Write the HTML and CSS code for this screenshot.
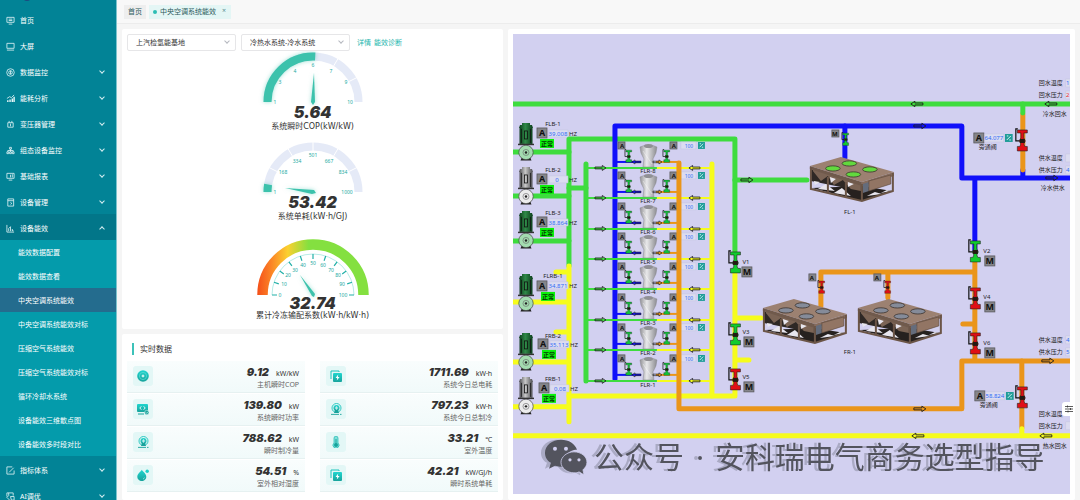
FILE: index.html
```
<!DOCTYPE html>
<html lang="zh-CN">
<head>
    <meta charset="UTF-8">
    <meta name="viewport" content="width=device-width, initial-scale=1.0">
    <title>中央空调系统能效</title>
    <link rel="stylesheet" href="styles.css">
</head>
<body>
    <svg class="defs" width="0" height="0" aria-hidden="true">
        <defs>
            <linearGradient id="teal" x1="0" y1="0" x2="0" y2="1">
                <stop offset="0" stop-color="#1fd6cf"/>
                <stop offset="1" stop-color="#18a39c"/>
            </linearGradient>
            <linearGradient id="level" gradientUnits="userSpaceOnUse" x1="-55" y1="0" x2="55" y2="0">
                <stop offset="0" stop-color="#f5521a"/>
                <stop offset="0.12" stop-color="#fb8426"/>
                <stop offset="0.27" stop-color="#fbd02f"/>
                <stop offset="0.46" stop-color="#84e040"/>
            </linearGradient>
            <linearGradient id="motorOn" x1="0" x2="1">
                <stop offset="0" stop-color="#0d3d1c"/>
                <stop offset="0.45" stop-color="#2f8a48"/>
                <stop offset="1" stop-color="#0d3d1c"/>
            </linearGradient>
            <linearGradient id="motorOff" x1="0" x2="1">
                <stop offset="0" stop-color="#4c4c50"/>
                <stop offset="0.45" stop-color="#c8c8c8"/>
                <stop offset="1" stop-color="#4c4c50"/>
            </linearGradient>
            <linearGradient id="steel" x1="0" x2="1">
                <stop offset="0" stop-color="#929296"/>
                <stop offset="0.4" stop-color="#e8e8ea"/>
                <stop offset="1" stop-color="#8b8b90"/>
            </linearGradient>
        </defs>
        <symbol id="i-bolt" viewBox="0 0 12 12">
            <path d="M1 9V1h8v1" fill="none" stroke="#1cc4bc"/>
            <rect x="3" y="3" width="9" height="9" rx="1" fill="url(#teal)"/>
            <path d="M8.2 4.5 5.6 8h1.6l-.4 2.4L9.6 7H7.9z" fill="#fff"/>
        </symbol>
        <symbol id="i-cop" viewBox="0 0 12 12">
            <circle cx="6" cy="6" r="5.8" fill="url(#teal)"/>
            <circle cx="6" cy="6" r="3.6" fill="none" stroke="#6fe0da" stroke-width=".6"/>
            <path d="M6 4.6v2.8M4.6 6h2.8" stroke="#fff" stroke-width="1"/>
        </symbol>
        <symbol id="i-screen" viewBox="0 0 12 12">
            <rect y="1" width="11" height="8" rx="1" fill="url(#teal)"/>
            <path d="M4.3 3.3 2.8 5l1.5 1.7M6.7 3.3 8.2 5 6.7 6.7" fill="none" stroke="#fff" stroke-width=".9"/>
            <path d="M1 11h6" stroke="#18a39c"/>
            <circle cx="9.8" cy="9.5" r="2.2" fill="#18a39c" stroke="#e3f7f6" stroke-width=".5"/>
            <path d="m8.8 9.5.8.8 1.3-1.5" fill="none" stroke="#fff" stroke-width=".6"/>
        </symbol>
        <symbol id="i-cold" viewBox="0 0 12 12">
            <circle cx="6.5" cy="5" r="4.5" fill="none" stroke="#1cc4bc" stroke-width=".9"/>
            <circle cx="6.5" cy="5" r="3" fill="url(#teal)"/>
            <path d="M6.5 3v4M4.8 4l3.4 2M8.2 4 4.8 6" stroke="#fff" stroke-width=".5"/>
            <path d="M4 10h5l-1-3H5z" fill="#18a39c"/>
            <path d="M1 11.4h8m1 0h1.5" stroke="#18a39c" stroke-width=".9"/>
        </symbol>
        <symbol id="i-temp" viewBox="0 0 12 12">
            <path d="M4 2.2a2 2 0 0 1 4 0V7a3 3 0 1 1-4 0z" fill="#7fe0da" stroke="#1cb9b1" stroke-width=".7"/>
            <circle cx="6" cy="9" r="2" fill="#18a39c"/>
            <path d="M6 3v6" stroke="#18a39c"/>
        </symbol>
        <symbol id="i-drop" viewBox="0 0 12 12">
            <path d="M4.8.8C6.5 3.2 9.3 5 9.3 7.900a4.500 4.200 0 0 1-9 0C.3 5 3.200 3.200 4.800.8z" fill="url(#teal)"/>
            <circle cx="10.200" cy="2.200" r="1.700" fill="#1fd0c8"/>
            <path d="M6 10a2 2 0 0 0 1.500-1.500" stroke="#bff5f1" stroke-width=".6" fill="none"/>
        </symbol>
        <symbol id="pump" viewBox="0 0 16 38" overflow="visible">
            <path d="M4 0h8v2h2l1 3H1l1-3h2z"/>
            <rect x="1.500" y="5" width="13" height="16"/>
            <path d="M3.500 6v14M12.500 6v14" stroke="#111" stroke-width=".7"/>
            <rect x="6.500" y="8" width="3" height="8" fill="none" stroke="#111" stroke-width=".8"/>
            <path d="M0 21.500h16" stroke="#333" stroke-width="1.500"/>
            <path d="M4 34h8l1.500 3.500h-11z" fill="#222"/>
            <circle cx="8" cy="29.500" r="7.200" fill="currentColor" stroke="#444" stroke-width=".7"/>
            <circle cx="8" cy="29.500" r="3" fill="none" stroke="#666" stroke-width=".6"/>
            <circle cx="8" cy="29.500" r="1.200" fill="#222"/>
        </symbol>
        <symbol id="valve" viewBox="0 0 12 24" overflow="visible">
            <path d="M2 1H0v12h4" fill="none" stroke="#111" stroke-width="1.200"/>
            <path d="M1.500 2h10v3H8v5l1.500 3-1.500 3 1 2.500h2.500V23H1.500v-4.500H4L5 16l-1.500-3L5 10V5H1.500z" stroke="#222" stroke-width=".6"/>
            <rect x="4" y="11" width="5" height="4" fill="#221a12"/>
        </symbol>
        <symbol id="chiller" viewBox="0 0 84 46" overflow="visible">
            <path d="m2 31 50 13 30-10-30-5z" fill="#26211f"/>
            <path d="m8 32 8-5 9 7zm16 4 8-5 9 8zm33 3 8-4 7 2zm14-3 6-3 4 1z" fill="#e8e6ee"/>
            <path d="m1 12 50 14v8L1 24z" fill="#2e2825"/>
            <path d="m3 14 8 10 7-5 6 9 9-5 8 9 10 2v-8L3 12z" fill="#7b6455"/>
            <path d="m20 20 6 2-5 4zm18 5 6 2-6 3zM4 24l6 1-5 3z" fill="#e8e6ee"/>
            <path d="M0 9 31 0l53 15-32 10z" fill="#9c8171"/>
            <path d="m0 9 52 16v4L0 12z" fill="#705a4c"/>
            <path d="m52 25 32-10v4L52 29z" fill="#866c5d"/>
            <path d="m53 27 6-2v9l-6 2z" fill="#646c7c"/>
            <path d="m59 24 22-6v9l-22 7z" fill="#927564" stroke="#5b483d" stroke-width=".6"/>
            <path d="M1 10v22l51 12 31-10V16M52 27v17M18 20v16M36 25v16" fill="none" stroke="#6b5547" stroke-width="2"/>
            <g stroke="#3c342f" stroke-width=".8">
                <ellipse cx="23" cy="11.500" rx="7.300" ry="2.600"/>
                <ellipse cx="39.500" cy="6.500" rx="7.300" ry="2.600"/>
                <ellipse cx="60" cy="12.500" rx="7.300" ry="2.600"/>
                <ellipse cx="43.500" cy="17.500" rx="7.300" ry="2.600"/>
            </g>
        </symbol>
        <symbol id="arrow" viewBox="0 0 12 6" overflow="visible">
            <path d="M0 2h8V.3L12 3 8 5.700V4H0z" fill="none" stroke="#1c1c1c" stroke-width=".9"/>
        </symbol>
        <symbol id="percent" viewBox="0 0 8 8">
            <rect width="8" height="8" fill="#1f9c98"/>
            <path d="m2 6 4-4M2 2h1.500M4.500 6H6" stroke="#e8ffff" stroke-width=".9"/>
        </symbol>
        <!-- one cooling tower branch, drawn at the position of tower 8 -->
        <symbol id="tower-row" overflow="visible">
            <path d="M586 168h71" class="pipe thin green"/>
            <path d="M657 168h55" class="pipe thin yellow"/>
            <path d="M615 162h26" class="pipe thin blue"/>
            <path d="M656 162h23" class="pipe thin orange"/>
            <path d="M640 147q9-4 17 0l-1 6-3 6 1 8h-11l1-8-3-6z" fill="url(#steel)" stroke="#8a8a90" stroke-width=".5"/>
            <ellipse cx="648.500" cy="146" rx="4.500" ry="2" fill="#909095"/>
            <path d="m643 151 9 13" stroke="#fff" stroke-width=".8" opacity=".5"/>
            <use href="#valve" x="625" y="149" width="7" height="14" fill="#11c23a"/>
            <use href="#valve" x="663" y="149" width="7" height="14" fill="#11c23a"/>
            <rect x="618" y="142" width="7" height="7" class="mode"/>
            <rect x="670" y="142" width="7" height="7" class="mode"/>
            <rect x="681" y="142" width="15" height="7" class="field"/>
            <use href="#percent" x="698" y="142" width="7" height="7"/>
            <use href="#arrow" x="595" y="165" width="11" height="6"/>
            <use href="#arrow" x="-700" y="-171" width="11" height="6" transform="rotate(180)"/>
            <use href="#arrow" x="-641" y="-165" width="9" height="6" transform="rotate(180)"/>
            <use href="#arrow" x="653" y="159" width="9" height="6"/>
        </symbol>
    </svg>

    <div class="layout">
        <aside class="sidebar">
            <div class="brand"></div>
            <nav class="menu">
                <a href="#"><svg viewBox="0 0 10 10"><path d="M1 1.500h8v5.500H1zM3 9h4M3 3.500h4M3 5h4"/></svg>首页</a>
                <a href="#"><svg viewBox="0 0 10 10"><path d="M1 1.500h8V7H1zM1 9h8"/></svg>大屏</a>
                <a href="#" class="more"><svg viewBox="0 0 10 10"><circle cx="5" cy="5" r="4.200"/><circle cx="5" cy="5" r="2"/><path d="M5 3v4"/></svg>数据监控</a>
                <a href="#" class="more"><svg viewBox="0 0 10 10"><path d="M2 9V7M4.500 9V6M7 9V5M9 9V3" stroke-width="1.600"/><path d="m1 5 3-2 2 1 3-3"/></svg>能耗分析</a>
                <a href="#" class="more"><svg viewBox="0 0 10 10"><path d="M2 3h6v5H2zM3.500 1v2M6.500 1v2M5 4v3"/></svg>变压器管理</a>
                <a href="#" class="more"><svg viewBox="0 0 10 10"><path d="M4 1.500h2v2H4zM1 6.500h2v2H1zM4 6.500h2v2H4zM7 6.500h2v2H7zM5 3.500v3M2 6.500V5h6v1.500"/></svg>组态设备监控</a>
                <a href="#" class="more"><svg viewBox="0 0 10 10"><path d="M1 1.500h8V7H1zM3 9h4M5 3v3M7 2.500V6" /></svg>基础报表</a>
                <a href="#" class="more"><svg viewBox="0 0 10 10"><path d="M2 1h6.500v8H2zM2 3h6.500M5 5l1.500 1L5 7"/></svg>设备管理</a>
                <a href="#" class="more open"><svg viewBox="0 0 10 10"><path d="M1 1v8h8M3 8V5l2-2v5M7 8V6l1 2"/></svg>设备能效</a>
            </nav>
            <nav class="submenu">
                <a href="#">能效数据配置</a>
                <a href="#">能效数据查看</a>
                <a href="#" class="active">中央空调系统能效</a>
                <a href="#">中央空调系统能效对标</a>
                <a href="#">压缩空气系统能效</a>
                <a href="#">压缩空气系统能效对标</a>
                <a href="#">循环冷却水系统</a>
                <a href="#">设备能效三维散点图</a>
                <a href="#">设备能效多时段对比</a>
            </nav>
            <nav class="menu">
                <a href="#" class="more"><svg viewBox="0 0 10 10"><path d="M9 5v4H1V1h6M3.500 7l5-5"/></svg>指标体系</a>
                <a href="#" class="more"><svg viewBox="0 0 10 10"><path d="M1 5V1h7v3M3 1v3l-2 2 3 3M5 5h4v4H6z"/></svg>AI调优</a>
            </nav>
        </aside>

        <div class="page">
            <header class="tabs">
                <a href="#" class="tab">首页</a>
                <a href="#" class="tab current"><i class="dot"></i>中央空调系统能效<span class="close">×</span></a>
            </header>

            <main class="content">
                <div class="left">
                    <section class="card gauges">
                        <div class="filters">
                            <div class="picker">
                                <select aria-label="基地"><option>上汽检氢能基地</option></select>
                            </div>
                            <div class="picker">
                                <select aria-label="系统"><option>冷热水系统-冷水系统</option></select>
                            </div>
                            <a href="#">详情</a>
                            <a href="#">能效诊断</a>
                        </div>

                        <div class="gauge">
                            <svg width="120" height="54" viewBox="-60 -50 120 54">
                                <path class="track" d="M-45.500 0a45.500 45.500 0 0 1 91 0"/>
                                <path class="split" d="m-35 -20-10-5M-20 -35l-6-10M20 -35l6-10M35 -20l10-5"/>
                                <path class="fill" d="M-45.500 0A45.500 45.500 0 0 1 2.200-45.400"/>
                                <path class="needle" d="M1-29 2 0 0 3-2 0z"/>
                                <text x="-38">1</text>
                                <text x="-33" y="-20">3</text>
                                <text x="-18" y="-31">4</text>
                                <text y="-37">6</text>
                                <text x="18" y="-31">7</text>
                                <text x="33" y="-20">9</text>
                                <text x="37">10</text>
                            </svg>
                            <strong>5.64</strong>
                            <span>系统瞬时COP(kW/kW)</span>
                        </div>

                        <div class="gauge">
                            <svg width="120" height="54" viewBox="-60 -50 120 54">
                                <path class="track" d="M-45.500 0a45.500 45.500 0 0 1 91 0"/>
                                <path class="split" d="m-35 -20-10-5M-20 -35l-6-10M0-40v-11M20 -35l6-10M35 -20l10-5"/>
                                <path class="fill" d="M-45.500 0A45.500 45.500 0 0 1-44.900-7.500"/>
                                <path class="needle" d="M-28-4 1-2 3 1-1 2z"/>
                                <text x="-38">1</text>
                                <text x="-30" y="-20">168</text>
                                <text x="-16" y="-31">334</text>
                                <text y="-37">501</text>
                                <text x="16" y="-31">667</text>
                                <text x="30" y="-20">834</text>
                                <text x="34">1000</text>
                            </svg>
                            <strong>53.42</strong>
                            <span>系统单耗(kW·h/GJ)</span>
                        </div>

                        <div class="gauge wide">
                            <svg width="120" height="58" viewBox="-60 -56 120 58">
                                <path d="M-50.500 0a50.500 50.500 0 0 1 101 0" fill="none" stroke="url(#level)" stroke-width="10.500"/>
                                <path d="M-41 0a41 41 0 0 1 82 0" fill="none" stroke="#a5e6e0" stroke-width=".8"/>
                                <path class="ticks" d="M-41 0h5M-39-12.700l4.800 1.600M-33.200-24.100l4 3M-24.100-33.200l3 4M-12.700-39l1.600 4.800M0-41v5M12.700-39l-1.600 4.800M24.100-33.200l-3 4M33.200-24.100l-4 3M39-12.700l-4.800 1.600M41 0h-5"/>
                                <path class="needle" d="M-13-20 2-1 1 2-1 1z"/>
                                <text x="-33">0</text>
                                <text x="-29" y="-11">10</text>
                                <text x="-25" y="-20">20</text>
                                <text x="-18" y="-25">30</text>
                                <text x="-10" y="-30">40</text>
                                <text y="-32">50</text>
                                <text x="10" y="-30">60</text>
                                <text x="18" y="-25">70</text>
                                <text x="25" y="-20">80</text>
                                <text x="29" y="-11">90</text>
                                <text x="30">100</text>
                            </svg>
                            <strong>32.74</strong>
                            <span>累计冷冻输配系数(kW·h/kW·h)</span>
                        </div>
                    </section>

                    <section class="card realtime">
                        <h2>实时数据</h2>
                        <div class="stats">
                            <div class="stat"><i><svg><use href="#i-cop"/></svg></i><p><b>9.12</b><em>kW/kW</em></p><small>主机瞬时COP</small></div>
                            <div class="stat"><i><svg><use href="#i-bolt"/></svg></i><p><b>1711.69</b><em>kW·h</em></p><small>系统今日总电耗</small></div>
                            <div class="stat"><i><svg><use href="#i-screen"/></svg></i><p><b>139.80</b><em>kW</em></p><small>系统瞬时功率</small></div>
                            <div class="stat"><i><svg><use href="#i-cold"/></svg></i><p><b>797.23</b><em>kW·h</em></p><small>系统今日总制冷</small></div>
                            <div class="stat"><i><svg><use href="#i-cold"/></svg></i><p><b>788.62</b><em>kW</em></p><small>瞬时制冷量</small></div>
                            <div class="stat"><i><svg><use href="#i-temp"/></svg></i><p><b>33.21</b><em>℃</em></p><small>室外温度</small></div>
                            <div class="stat"><i><svg><use href="#i-drop"/></svg></i><p><b>54.51</b><em>%</em></p><small>室外相对湿度</small></div>
                            <div class="stat"><i><svg><use href="#i-bolt"/></svg></i><p><b>42.21</b><em>kW/GJ/h</em></p><small>瞬时系统单耗</small></div>
                        </div>
                    </section>
                </div>

                <section class="card diagram">
                    <svg class="scada" viewBox="513 34 557 460">
                        <!-- main pipes -->
                        <g class="pipe">
                            <path class="green" d="M513 104h557"/>
                            <path class="green" d="M513 152h56M513 196h56M513 241h56M569 188h17M735 180h72"/>
                            <path class="green" d="M569 266V139h166v114"/>
                            <path class="yellow" d="M569 266v156M513 302h56M513 362h56M513 407h56M556 272h13M556 332h13"/>
                            <path class="yellow" d="M569 396h166V274M735 318h26M735 360h14"/>
                            <path class="yellow" d="M513 436h557"/>
                            <path class="blue" d="M845 126v32"/>
                            <path class="blue" d="M615 379V126h347v52h108M975 178v72M1023 178v-8"/>
                            <path class="orange" d="M975 262v97M821 306v-34h154M888 272v26M963 324h12"/>
                            <path class="orange" d="M1023 114v56M1022 361v67"/>
                            <path class="green" d="M1023 104v9"/>
                            <path class="yellow" d="M1022 429v7"/>
                        </g>

                        <!-- cooling towers -->
                        <use href="#tower-row"/>
                        <use href="#tower-row" y="30"/>
                        <use href="#tower-row" y="61"/>
                        <use href="#tower-row" y="91"/>
                        <use href="#tower-row" y="121"/>
                        <use href="#tower-row" y="152"/>
                        <use href="#tower-row" y="182"/>
                        <use href="#tower-row" y="213"/>
                        <g class="pipe">
                            <path class="green" d="M586 164v217"/>
                            <path class="yellow" d="M712 164v232"/>
                            <path class="orange" d="M679 163v246h283v-48h108"/>
                        </g>
                        <g class="name">
                            <text x="648" y="171">FLR-8</text>
                            <text x="648" y="201">FLR-7</text>
                            <text x="648" y="232">FLR-6</text>
                            <text x="648" y="262">FLR-5</text>
                            <text x="648" y="292">FLR-4</text>
                            <text x="648" y="323">FLR-3</text>
                            <text x="648" y="353">FLR-2</text>
                            <text x="648" y="385">FLR-1</text>
                        </g>
                        <g class="tag">
                            <text x="622" y="146">A</text>
                            <text x="622" y="176">A</text>
                            <text x="622" y="207">A</text>
                            <text x="622" y="237">A</text>
                            <text x="622" y="267">A</text>
                            <text x="622" y="298">A</text>
                            <text x="622" y="328">A</text>
                            <text x="622" y="359">A</text>
                            <text x="674" y="146">A</text>
                            <text x="674" y="176">A</text>
                            <text x="674" y="207">A</text>
                            <text x="674" y="237">A</text>
                            <text x="674" y="267">A</text>
                            <text x="674" y="298">A</text>
                            <text x="674" y="328">A</text>
                            <text x="674" y="359">A</text>
                        </g>
                        <g class="reading small">
                            <text x="689" y="146">100</text>
                            <text x="689" y="176">100</text>
                            <text x="689" y="207">100</text>
                            <text x="689" y="237">100</text>
                            <text x="689" y="267">100</text>
                            <text x="689" y="298">100</text>
                            <text x="689" y="328">100</text>
                            <text x="689" y="359">100</text>
                        </g>

                        <!-- pumps -->
                        <g fill="url(#motorOn)" color="#a3dcb0">
                            <use href="#pump" x="518" y="123" width="16" height="38"/>
                            <use href="#pump" x="518" y="211" width="16" height="38"/>
                            <use href="#pump" x="518" y="274" width="16" height="38"/>
                            <use href="#pump" x="518" y="333" width="16" height="38"/>
                        </g>
                        <g fill="url(#motorOff)" color="#ececec">
                            <use href="#pump" x="518" y="167" width="16" height="38"/>
                            <use href="#pump" x="518" y="377" width="16" height="38"/>
                        </g>
                        <g class="field">
                            <rect x="549" y="130" width="19" height="7"/>
                            <rect x="549" y="176" width="19" height="7"/>
                            <rect x="549" y="219" width="19" height="7"/>
                            <rect x="549" y="282" width="19" height="7"/>
                            <rect x="550" y="341" width="19" height="7"/>
                            <rect x="550" y="385" width="19" height="7"/>
                        </g>
                        <g class="mode">
                            <rect x="537" y="128" width="10" height="10"/>
                            <rect x="537" y="174" width="10" height="10"/>
                            <rect x="537" y="217" width="10" height="10"/>
                            <rect x="537" y="281" width="10" height="10"/>
                            <rect x="538" y="339" width="10" height="10"/>
                            <rect x="539" y="383" width="10" height="10"/>
                        </g>
                        <g class="tag big">
                            <text x="542" y="133">A</text>
                            <text x="542" y="179">A</text>
                            <text x="542" y="222">A</text>
                            <text x="542" y="286">A</text>
                            <text x="543" y="344">A</text>
                            <text x="544" y="388">A</text>
                        </g>
                        <g class="reading">
                            <text x="558" y="134">39.008</text>
                            <text x="557" y="180">0</text>
                            <text x="558" y="223">38.864</text>
                            <text x="558" y="286">34.871</text>
                            <text x="559" y="345">35.113</text>
                            <text x="560" y="389">0.08</text>
                        </g>
                        <g class="name">
                            <text x="553" y="124">FLB-1</text>
                            <text x="553" y="170">FLB-2</text>
                            <text x="553" y="213">FLB-3</text>
                            <text x="553" y="276">FLRB-1</text>
                            <text x="553" y="336">FRB-2</text>
                            <text x="553" y="379">FRB-1</text>
                            <text x="573" y="134">HZ</text>
                            <text x="573" y="180">HZ</text>
                            <text x="573" y="223">HZ</text>
                            <text x="573" y="286">HZ</text>
                            <text x="574" y="345">HZ</text>
                            <text x="574" y="389">HZ</text>
                        </g>
                        <g fill="#0bf00b">
                            <rect x="540" y="139" width="14" height="9"/>
                            <rect x="540" y="185" width="14" height="9"/>
                            <rect x="540" y="228" width="14" height="9"/>
                            <rect x="541" y="292" width="14" height="9"/>
                            <rect x="542" y="350" width="14" height="9"/>
                            <rect x="542" y="394" width="14" height="9"/>
                        </g>
                        <g class="state">
                            <text x="547" y="144">正常</text>
                            <text x="547" y="190">正常</text>
                            <text x="547" y="233">正常</text>
                            <text x="548" y="297">正常</text>
                            <text x="549" y="355">正常</text>
                            <text x="549" y="399">正常</text>
                        </g>

                        <!-- chillers -->
                        <use href="#chiller" x="810" y="157" width="84" height="46" fill="#62d83e"/>
                        <use href="#chiller" x="763" y="299" width="84" height="46" fill="#858b99"/>
                        <use href="#chiller" x="858" y="299" width="84" height="46" fill="#858b99"/>

                        <!-- valves -->
                        <g fill="#11cc2e">
                            <use href="#valve" x="729" y="250" width="12" height="24"/>
                            <use href="#valve" x="729" y="322" width="12" height="24"/>
                            <use href="#valve" x="969" y="239" width="12" height="24"/>
                            <use href="#valve" x="842" y="132" width="7" height="14"/>
                        </g>
                        <g fill="#e00f16">
                            <use href="#valve" x="729" y="367" width="12" height="24"/>
                            <use href="#valve" x="969" y="286" width="12" height="24"/>
                            <use href="#valve" x="969" y="331" width="12" height="24"/>
                            <use href="#valve" x="1016" y="128" width="12" height="24"/>
                            <use href="#valve" x="1016" y="385" width="12" height="24"/>
                            <use href="#valve" x="818" y="280" width="7" height="14"/>
                            <use href="#valve" x="884" y="280" width="7" height="14"/>
                        </g>
                        <g class="mode">
                            <rect x="742" y="267" width="10" height="10"/>
                            <rect x="744" y="337" width="10" height="10"/>
                            <rect x="744" y="382" width="10" height="10"/>
                            <rect x="985" y="256" width="10" height="10"/>
                            <rect x="985" y="302" width="10" height="10"/>
                            <rect x="985" y="348" width="10" height="10"/>
                            <rect x="974" y="133" width="10" height="10"/>
                            <rect x="975" y="391" width="10" height="10"/>
                            <rect x="832" y="130" width="7" height="7"/>
                            <rect x="809" y="274" width="7" height="7"/>
                            <rect x="874" y="274" width="7" height="7"/>
                        </g>
                        <g class="tag big">
                            <text x="747" y="272">M</text>
                            <text x="749" y="342">M</text>
                            <text x="749" y="387">M</text>
                            <text x="990" y="261">M</text>
                            <text x="990" y="307">M</text>
                            <text x="990" y="353">M</text>
                            <text x="979" y="138">A</text>
                            <text x="980" y="396">A</text>
                        </g>
                        <g class="tag">
                            <text x="835" y="134">M</text>
                            <text x="812" y="278">A</text>
                            <text x="877" y="278">A</text>
                        </g>
                        <g class="field">
                            <rect x="985" y="134" width="19" height="8"/>
                            <rect x="986" y="392" width="19" height="8"/>
                            <rect x="1066" y="79" width="6" height="8"/>
                            <rect x="1066" y="91" width="6" height="8"/>
                            <rect x="1066" y="154" width="6" height="8"/>
                            <rect x="1066" y="166" width="6" height="8"/>
                            <rect x="1066" y="336" width="6" height="8"/>
                            <rect x="1066" y="348" width="6" height="8"/>
                            <rect x="1066" y="422" width="6" height="8"/>
                        </g>
                        <g class="reading">
                            <text x="994" y="138">64.077</text>
                            <text x="995" y="396">58.824</text>
                            <text x="1068" y="83">1</text>
                            <text x="1068" y="95" fill="#f03030">2</text>
                            <text x="1068" y="170">4</text>
                            <text x="1068" y="340">4</text>
                            <text x="1068" y="352">5</text>
                        </g>
                        <use href="#percent" x="1005" y="134" width="8" height="8"/>
                        <use href="#percent" x="1006" y="392" width="8" height="8"/>
                        <g class="name">
                            <text x="746" y="262">V1</text>
                            <text x="746" y="332">V3</text>
                            <text x="746" y="377">V5</text>
                            <text x="987" y="251">V2</text>
                            <text x="987" y="297">V4</text>
                            <text x="987" y="343">V6</text>
                            <text x="850" y="212">FL-1</text>
                            <text x="850" y="352">FR-1</text>
                            <text x="988" y="147">旁通阀</text>
                            <text x="989" y="405">旁通阀</text>
                            <text x="1051" y="83">回水温度</text>
                            <text x="1051" y="95">回水压力</text>
                            <text x="1055" y="114">冷水回水</text>
                            <text x="1051" y="158">供水温度</text>
                            <text x="1051" y="170">供水压力</text>
                            <text x="1053" y="188">冷水供水</text>
                            <text x="1051" y="340">供水温度</text>
                            <text x="1051" y="352">供水压力</text>
                            <text x="1051" y="414">回水温度</text>
                            <text x="1051" y="426">回水压力</text>
                            <text x="1055" y="446">热水回水</text>
                        </g>

                        <!-- flow direction -->
                        <use href="#arrow" x="741" y="177" width="12" height="6"/>
                        <use href="#arrow" x="914" y="123" width="12" height="6"/>
                        <use href="#arrow" x="1046" y="175" width="12" height="6"/>
                        <use href="#arrow" x="914" y="406" width="12" height="6"/>
                        <use href="#arrow" x="1042" y="358" width="12" height="6"/>
                        <g transform="rotate(180)">
                            <use href="#arrow" x="-923" y="-107" width="12" height="6"/>
                            <use href="#arrow" x="-1057" y="-107" width="12" height="6"/>
                            <use href="#arrow" x="-924" y="-439" width="12" height="6"/>
                            <use href="#arrow" x="-1052" y="-439" width="12" height="6"/>
                        </g>

                        <g class="account">
                            <path d="M561 440c-9 0-16 6-16 13 0 4 2 8 6 10l-2 6 6-3c4 1 6 1 8 1-2-10 6-17 14-17-2-6-8-10-16-10z"/>
                            <path d="M574 452c-7 0-13 5-13 10.500S567 473 574 473c2 0 4 0 5-1l5 3-1-5c2-2 4-4 4-7.500 0-6-6-10.500-13-10.500z" stroke="#d2d0f0" stroke-width=".8"/>
                            <g fill="#d2d0f0">
                                <circle cx="555" cy="449" r="2"/>
                                <circle cx="566" cy="449" r="2"/>
                                <circle cx="570" cy="460" r="1.600"/>
                                <circle cx="579" cy="460" r="1.600"/>
                            </g>
                            <text x="594" y="468">公众号</text>
                            <text x="696" y="468" class="sep">·</text>
                            <text x="715" y="468">安科瑞电气商务选型指导</text>
                        </g>
                    </svg>
                    <button type="button" class="settings" aria-label="设置">
                        <svg viewBox="0 0 8 8"><path d="M0 1.500h8M0 4h8M0 6.500h8M2.500.5v2M5.500 3v2M3 5.500v2"/></svg>
                    </button>
                </section>
            </main>
        </div>
    </div>
</body>
</html>
```
FILE: styles.css
```
* {
    box-sizing: border-box;
}
body {
    margin: 0;
    height: 100vh;
    overflow: hidden;
    background: #f5f5f5;
    color: #333;
    font-family: "Noto Sans", "Noto Sans CJK SC", sans-serif;
    font-size: 7px;
    line-height: 12px;
}
a {
    color: inherit;
    text-decoration: none;
}
.defs {
    position: absolute;
}
.layout {
    display: flex;
    height: 100vh;
}

/* sidebar */
.sidebar {
    flex: 0 0 117px;
    background: #028396;
    border-right: 1px solid #7cc3cd;
    color: #fff;
    overflow: hidden;
}
.brand {
    width: 10px;
    height: 8px;
    margin: -7px 0 5px 22px;
    border-radius: 0 0 5px 5px;
    background: #1c4a80;
}
.menu a {
    display: flex;
    align-items: center;
    gap: 5px;
    height: 26px;
    padding: 3px 10px 0 6px;
}
.menu svg {
    width: 9px;
    height: 9px;
    fill: none;
    stroke: #e3f4f6;
    stroke-width: 0.9;
}
.more::after {
    content: "";
    width: 3px;
    height: 3px;
    margin: 0 2px 4px auto;
    border: solid #d5eef1;
    border-width: 0 1px 1px 0;
    transform: rotate(45deg);
}
.menu .open {
    background: #027689;
}
.open::after {
    margin-bottom: 0;
    transform: rotate(225deg);
}
.submenu {
    background: #049bab;
}
.submenu a {
    display: flex;
    align-items: center;
    height: 24px;
    padding: 2px 0 0 18px;
}
.submenu .active {
    background: #246c8e;
}

/* tabs */
.page {
    flex: 1;
    min-width: 0;
    display: flex;
    flex-direction: column;
}
.tabs {
    display: flex;
    gap: 3px;
    height: 24px;
    padding: 5px 7px;
    background: #f8f8f8;
    border-bottom: 1px solid #ececec;
}
.tab {
    height: 14px;
    padding: 1px 4px;
    background: #eeeeee;
    color: #2c5a5c;
}
.tab.current {
    display: flex;
    align-items: center;
    background: #e4f6f5;
}
.dot {
    width: 4px;
    height: 4px;
    margin-right: 3px;
    border-radius: 50%;
    background: #2bbdb4;
}
.close {
    margin: -3px 1px 0 6px;
    color: #5a8f91;
}

/* content */
.content {
    flex: 1;
    min-height: 0;
    display: flex;
    gap: 5px;
    padding: 5px 5px 0;
}
.left {
    flex: 0 0 40%;
    display: flex;
    flex-direction: column;
    gap: 5px;
}
.card {
    background: #fff;
    border-radius: 2px;
}
.gauges {
    height: 300px;
    padding: 5px;
    display: flex;
    flex-direction: column;
    align-items: center;
}
.filters {
    align-self: stretch;
    display: flex;
    align-items: center;
    gap: 5px;
    color: #22b5ad;
}
.filters a {
    margin-right: -2px;
}
.picker {
    position: relative;
    width: 109px;
}
.picker + .picker {
    margin-right: 2px;
}
.picker::after {
    content: "";
    position: absolute;
    top: 5px;
    right: 7px;
    width: 3px;
    height: 3px;
    border: solid #b5b8bf;
    border-width: 0 1px 1px 0;
    transform: rotate(45deg);
}
.picker select {
    display: block;
    width: 100%;
    height: 17px;
    padding: 0 8px;
    appearance: none;
    border: 1px solid #e6e6e8;
    border-radius: 2px;
    background: #fff;
    color: #333;
    font: inherit;
}
.gauge {
    display: flex;
    flex-direction: column;
    align-items: center;
    margin-top: 1px;
    font-family: "DejaVu Sans", "Noto Sans CJK SC", sans-serif;
    font-size: 8px;
}
.gauge + .gauge {
    margin-top: 9px;
}
.gauge + .wide {
    margin-top: 16px;
}
.gauge svg {
    overflow: visible;
}
.gauge strong {
    font: italic 900 16px/12px Inter, sans-serif;
    margin-bottom: 3px;
}
.wide strong {
    margin-bottom: 1px;
}
.gauge text {
    font-family: "Noto Sans", sans-serif;
    font-size: 5px;
    text-anchor: middle;
    dominant-baseline: central;
    fill: #22aaa2;
}
.track {
    fill: none;
    stroke: #e5eaf7;
    stroke-width: 8;
}
.split {
    stroke: #fff;
    stroke-width: 1;
}
.fill {
    fill: none;
    stroke: #3cc2ac;
    stroke-width: 8;
    filter: drop-shadow(0 0 2px rgba(60, 194, 172, 0.5));
}
.needle {
    fill: #3cc2ac;
    filter: drop-shadow(0 0 2px rgba(60, 194, 172, 0.5));
}
.ticks {
    fill: none;
    stroke: #22b0a8;
    stroke-width: 1.2;
}

/* realtime data */
.realtime {
    flex: 1;
    padding: 9px 5px 0;
}
.realtime h2 {
    margin: 0 0 6px 5px;
    padding-left: 6px;
    border-left: 2px solid #3cc2b9;
    font-size: 8px;
    line-height: 12px;
    font-weight: normal;
}
.stats {
    display: grid;
    grid-template-columns: 1fr 1fr;
    gap: 1px 15px;
}
.stat {
    display: grid;
    grid-template-columns: 20px 1fr;
    grid-template-rows: 13px 12px;
    height: 32px;
    padding: 5px 6px 0;
    background: linear-gradient(#f9fdfd, #f1fafa);
    border-bottom: 1px solid #e6f1f1;
    text-align: right;
}
.stat i {
    grid-row: 1 / 3;
    display: flex;
    align-items: center;
    justify-content: center;
    height: 20px;
    border-radius: 3px;
    background: #e3f7f6;
}
.stat i svg {
    width: 12px;
    height: 12px;
}
.stat p {
    margin: 0;
}
.stat b {
    font: italic 900 11px/12px Inter, sans-serif;
}
.stat em {
    margin-left: 7px;
    font-style: normal;
}
.stat small {
    font-size: 7px;
    color: #666;
}

/* system diagram */
.diagram {
    position: relative;
    flex: 1;
    min-width: 0;
    padding: 5px;
}
.scada {
    display: block;
    width: 100%;
    background: #d2d0f0;
}
.scada text {
    dominant-baseline: central;
    text-anchor: middle;
}
.pipe {
    fill: none;
    stroke-width: 5;
    stroke-linejoin: round;
    stroke-linecap: round;
}
.thin {
    stroke-width: 2;
    stroke-linecap: butt;
}
.green {
    stroke: #3edc3e;
}
.yellow {
    stroke: #f6fc1c;
}
.blue {
    stroke: #1010fa;
}
.orange {
    stroke: #ea951a;
}
.mode {
    fill: #85858a;
    stroke: #5a5a5e;
    stroke-width: 0.8;
}
.tag {
    font-size: 6px;
    font-weight: bold;
    fill: #111;
}
.tag.big {
    font-size: 9px;
}
.field {
    fill: #dcdcf0;
    stroke: #c4c6de;
    stroke-width: 0.5;
}
.reading {
    font-size: 6px;
    fill: #2f6cf6;
}
.reading.small {
    font-size: 5px;
}
.name {
    font-size: 6px;
    fill: #1c1c24;
}
.state {
    font-size: 6px;
    font-weight: bold;
    fill: #053b05;
}
.account {
    fill: #53545e;
    filter: drop-shadow(-4px 0 0 rgba(110, 112, 130, 0.4));
}
.scada .account text {
    font-family: "Noto Sans CJK SC", sans-serif;
    font-size: 30px;
    dominant-baseline: auto;
    text-anchor: start;
}
.scada .account .sep {
    font-family: "Noto Sans", sans-serif;
}
.settings {
    position: absolute;
    right: 0;
    top: 373px;
    width: 13px;
    height: 14px;
    padding: 3px;
    border: 0;
    border-radius: 3px 0 0 3px;
    background: #fff;
}
.settings svg {
    display: block;
    width: 8px;
    height: 8px;
    stroke: #333;
    stroke-width: 0.8;
}
```
